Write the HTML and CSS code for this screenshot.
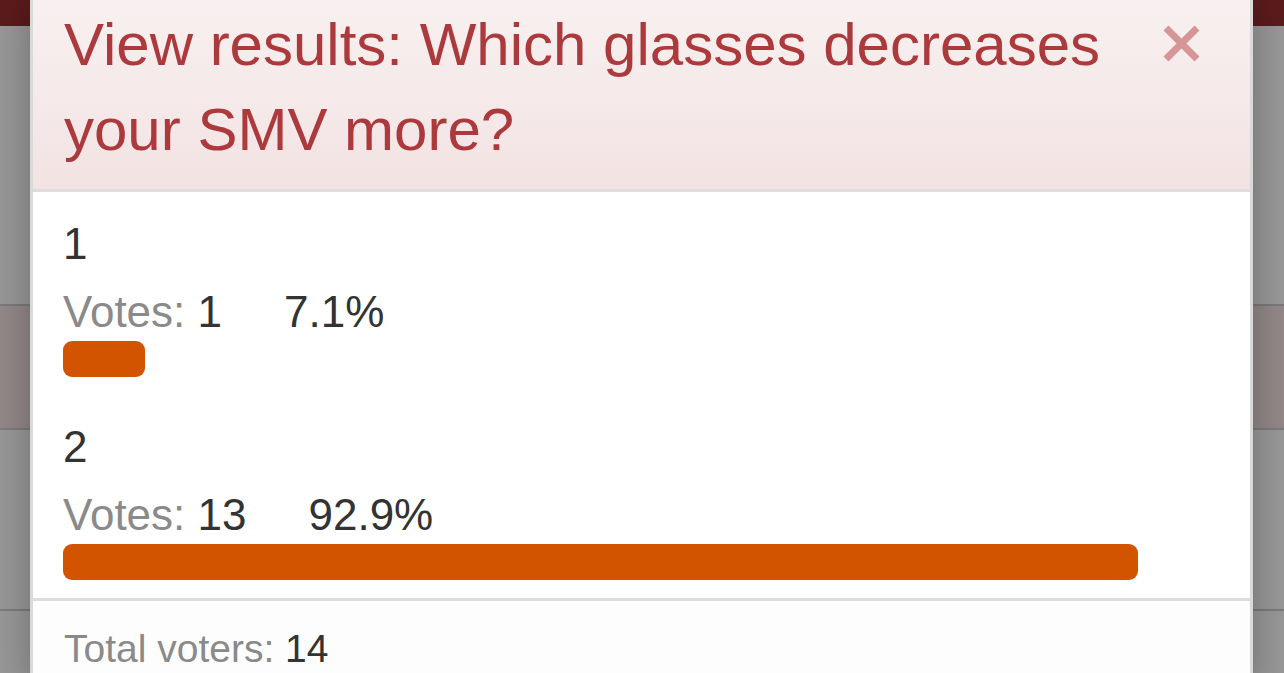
FILE: index.html
```html
<!DOCTYPE html>
<html lang="en">
<head>
<meta charset="utf-8">
<title>View results</title>
<link rel="stylesheet" href="styles.css">
</head>
<body>
<div class="page">
  <div class="topbar"></div>
  <div class="row row-a"></div>
  <div class="row row-alert"></div>
  <div class="row row-b"></div>
  <div class="row row-c"></div>
</div>
<div class="backdrop"></div>
<div class="modal">
  <div class="modal-header">
    <h2 class="modal-title">View results: Which glasses decreases your SMV more?</h2>
    <button class="close" aria-label="Close">
      <svg width="37" height="37" viewBox="0 0 37 37"><path d="M3 3 L34 34 M34 3 L3 34" stroke="#d69697" stroke-width="7" stroke-linecap="butt" fill="none"/></svg>
    </button>
  </div>
  <div class="modal-body">
    <div class="option">
      <div class="option-label">1</div>
      <div class="option-votes"><span class="muted">Votes:</span> 1<span class="pct">7.1%</span></div>
      <div class="track"><div class="bar" style="width:7.1%"></div></div>
    </div>
    <div class="option">
      <div class="option-label">2</div>
      <div class="option-votes"><span class="muted">Votes:</span> 13<span class="pct">92.9%</span></div>
      <div class="track"><div class="bar" style="width:92.9%"></div></div>
    </div>
  </div>
  <div class="modal-footer"><span class="muted">Total voters:</span> 14</div>
</div>
</body>
</html>
```
FILE: styles.css
```css
html, body {
  margin: 0;
  padding: 0;
}
body {
  width: 1284px;
  height: 673px;
  overflow: hidden;
  background: #ffffff;
  font-family: "Liberation Sans", Arial, Helvetica, sans-serif;
  position: relative;
}
.page {
  display: flex;
  flex-direction: column;
}
.topbar {
  height: 26px;
  background: #982d30;
}
.row {
  border-bottom: 2px solid #cfcfcf;
}
.row-a { height: 278px; background: #ffffff; }
.row-alert { height: 122px; background: #f9e4e4; }
.row-b { height: 179px; background: #ffffff; }
.row-c { height: 80px; background: #ffffff; }

.backdrop {
  position: absolute;
  inset: 0;
  background: rgba(0, 0, 0, 0.4);
}
.modal {
  position: absolute;
  left: 30px;
  top: 0;
  width: 1223px;
  box-sizing: border-box;
  border-left: 3px solid #d9d9d9;
  border-right: 3px solid #d9d9d9;
  background: #ffffff;
  box-shadow: 0 0 40px rgba(0, 0, 0, 0.3);
}
.modal-header {
  display: flex;
  align-items: flex-start;
  padding: 2px 50px 17px 31px;
  background: linear-gradient(#f8f0f0, #f3e3e3);
  border-bottom: 3px solid #dddddd;
}
.modal-title {
  flex: 1;
  margin: 0;
  font-size: 60px;
  font-weight: normal;
  line-height: 85px;
  color: #ac3a3d;
}
.close {
  flex: none;
  margin: 23px 0 0 40px;
  padding: 0;
  border: 0;
  background: none;
  width: 37px;
  height: 37px;
}
.close svg {
  display: block;
}
.modal-body {
  padding: 27px 30px 18px 30px;
  color: #333333;
  font-size: 44px;
  line-height: 50px;
}
.option + .option {
  margin-top: 45px;
}
.option-label {
  margin-bottom: 18px;
}
.option-votes {
  margin-bottom: 4px;
}
.muted {
  color: #8a8a8a;
}
.pct {
  margin-left: 62px;
}
.track {
  height: 36px;
}
.bar {
  height: 36px;
  border-radius: 9px;
  background: #d35400;
}
.modal-footer {
  border-top: 3px solid #dddddd;
  background: #fdfdfd;
  padding: 26px 30px 20px 31px;
  font-size: 39px;
  line-height: 44px;
  color: #333333;
}
```
